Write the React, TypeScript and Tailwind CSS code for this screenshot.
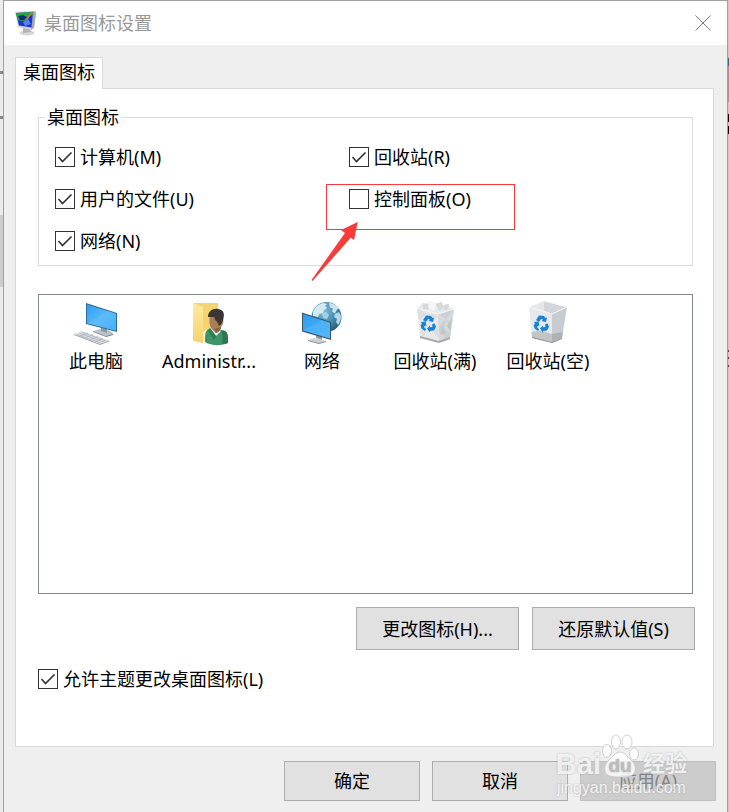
import React, { useState } from "react";

const ComputerIcon = () => (
  <svg viewBox="0 0 48 48" className="w-12 h-12" aria-hidden="true">
    <defs>
      <linearGradient id="pcScreen" x1="0" y1="0" x2="1" y2="1">
        <stop offset="0" stopColor="#2f9df0" />
        <stop offset="0.5" stopColor="#56b8fb" />
        <stop offset="1" stopColor="#3aa8f8" />
      </linearGradient>
    </defs>
    <path d="M21 32l13 5 7-2-1-2-9-4z" fill="#b9c3cb" />
    <path d="M21 32l13 5v1l-13-5z" fill="#83909a" />
    <path d="M34 37l7-2v1l-7 2z" fill="#6f7b85" />
    <path d="M29 28l6 2v4l-6-2z" fill="#8e9ba5" />
    <path d="M14 4l31 10v19L14 25z" fill="#2c6c9c" />
    <path d="M15 5.500l29 9.300v16.900L15 24.200z" fill="url(#pcScreen)" />
    <path d="M15 24.200L36 12l8 2.800v16.900z" fill="#6cc4fd" opacity="0.3" />
    <path d="M2 35l8-3 27 9.500-9 3.500z" fill="#dfe3e6" />
    <path d="M2 35v1l26 10 9-3.500v-1L28 45z" fill="#9ba4aa" />
    <path
      d="M5 35.500l25 9M7.500 34.300l25 8.800M9.500 33.200l25 8.800M8 37l8-3M13 39l8-3.300M18 40.800l8-3.200M23 42.800l8-3.200"
      stroke="#a9b1b7"
      strokeWidth="0.8"
      fill="none"
    />
  </svg>
);

const UserFolderIcon = () => (
  <svg viewBox="0 0 48 48" className="w-12 h-12" aria-hidden="true">
    <defs>
      <linearGradient id="folderFront" x1="0" y1="0" x2="0" y2="1">
        <stop offset="0" stopColor="#ffeaa3" />
        <stop offset="1" stopColor="#f5d26c" />
      </linearGradient>
    </defs>
    <path d="M8 4h25v35l-15 3H8z" fill="#f5d36e" />
    <path d="M8 4l10 4v36.500L8 41.500z" fill="url(#folderFront)" />
    <path d="M18 33l4-3v11l-4 3z" fill="#fff3c8" />
    <path d="M22 31l8-4 6 4 4 1c3 2 3 5 3 12-6 3-17 3-23-1 0-6 0-9 2-12z" fill="#3f9468" />
    <path d="M36 31l4 1c3 2 3 5 3 12l-6 1c1-5 1-9-1-14z" fill="#2c7650" />
    <path d="M25 29l3-1 8 4-5 5z" fill="#f1f5f2" />
    <path d="M25 29l6 8-2 4-6-9z" fill="#2f7d55" />
    <path d="M25 16c-1 5-1 9 1 13 1 2 3 3 5 5 3-1 5-4 5-6 3-3 3-8 1-12z" fill="#ad7d5a" />
    <path d="M31 34c3-1 5-4 5-6l-7 2z" fill="#8c6042" />
    <path d="M23 18c0-6 5-9 10-8 6 1 7 5 5 11-1 3-2 5-4 6-1-3-2-5-4-6 0-2 0-3-2-3s-4 0-5 0z" fill="#3b3735" />
  </svg>
);

const NetworkIcon = () => (
  <svg viewBox="0 0 48 48" className="w-12 h-12" aria-hidden="true">
    <defs>
      <radialGradient id="globeSea" cx="0.38" cy="0.3" r="0.75">
        <stop offset="0" stopColor="#7fc0da" />
        <stop offset="0.55" stopColor="#4690b4" />
        <stop offset="1" stopColor="#1e5b80" />
      </radialGradient>
      <linearGradient id="netScreen" x1="0" y1="0" x2="1" y2="1">
        <stop offset="0" stopColor="#2f9df0" />
        <stop offset="1" stopColor="#4db3fb" />
      </linearGradient>
    </defs>
    <circle cx="28.500" cy="18" r="15" fill="url(#globeSea)" />
    <path d="M15 13c2-5 6-8 10-9l4 1-2 2 2 2-3 2-1 3-4 1-1 3-5-1z" fill="#d5e9f0" />
    <path d="M31 3.500c4 1 8 3 10 6l-2 1-2 4-3-2 1-3-3-1z" fill="#cbe3ec" />
    <path d="M37 15l4-2 2 4c0 4-1 6-3 9l-2-3 1-3-3-2z" fill="#b6d6e3" />
    <path d="M24 14l4-1 3 3-2 4-4-1z" fill="#a7cfdf" />
    <path d="M18 34l6 2v5l-6-2z" fill="#8e9ba5" />
    <path d="M10 41l6-2 12 3-7 2z" fill="#cbd2d7" />
    <path d="M10 41l11 3 7-2v1l-7 2-11-3z" fill="#7d8992" />
    <path d="M4 13.500L33 23v18L4 32.500z" fill="#3c5666" />
    <path d="M5 15l27 8.700v15.900L5 31.600z" fill="url(#netScreen)" />
    <path d="M5 31.600L24 21l8 2.700v15.900z" fill="#6ac3fd" opacity="0.3" />
  </svg>
);

const RecycleMark = () => (
  <g fill="#1683d8">
    <path d="M12 21l3-4.500 5 .5 1.500 2 1.500-.500-1 4.500-4.500-1 1.300-1-1.300-1.500L15 23z" />
    <path d="M10 23l4.500-.500 1 4.500-1.200-.500L13 28l2 2.300-1 1.700-3.500-2.500-1-3.500 1.500-1z" />
    <path d="M16 29.500l3-3v1.800l2.500-.3-.5-2.500 2.500-1.200 1.500 3.700-2 3.500-4 .5v1.800z" />
  </g>
);

const FullBinIcon = () => (
  <svg viewBox="0 0 48 48" className="w-12 h-12" aria-hidden="true">
    <path d="M6 9l14-6 23 7-16 6z" fill="#d0d3d5" />
    <path d="M8 9l3-5 5 1 3-3 5 3 6-2 2 3 5-1 4 5-4 5-11 2-12-3z" fill="#e6e8ea" />
    <path d="M12 4l5 1 1 5-6 1zM25 5l6-2 1 6-4 3zM33 6l5-1-2 7-4-3z" fill="#d6d9dc" />
    <path d="M17 5l3-3 5 3-2 7-5-2z" fill="#f5f6f7" />
    <path d="M6 9l21 6 1 29-19-5z" fill="#e6e8e9" />
    <path d="M27 15l16-5-4 30-11 4z" fill="#cdd0d2" />
    <path d="M6 9l10 6-8 6zM16 15l11 0-5 9zM9 33l7-5-3 10zM22 32l6-4v12z" fill="#dcdfe1" />
    <path d="M27 15l8 5-7 7zM43 10l-8 10 6 5zM35 20l-3 12 8 1zM28 33l6 5-6 6z" fill="#d7dadc" />
    <path d="M32 26l3 8-6 2zM41 19l-5 8 3 5z" fill="#c1c5c8" />
    <path d="M9 37l19 5 11-4v2l-11 4-19-5z" fill="#aba9a7" />
    <path d="M6 9l21 6 16-5" stroke="#f6f7f7" strokeWidth="1" fill="none" />
    <RecycleMark />
  </svg>
);

const EmptyBinIcon = () => (
  <svg viewBox="0 0 48 48" className="w-12 h-12" aria-hidden="true">
    <path d="M5 8l15-6 23 6-15 7z" fill="#e4e6e8" />
    <path d="M20 2l23 6-15 7-8-3z" fill="#d3d6d9" />
    <path d="M5 8l23 7v29L8 39z" fill="#e6e8ea" />
    <path d="M28 15l15-7-5 31-10 5z" fill="#c8ccd0" />
    <path d="M7.500 33l10-1.500L28 35v8L8 38.500z" fill="#c2c4c6" />
    <path d="M28 35l10.800-2-.8 6-10 4z" fill="#aeb2b6" />
    <path d="M8 38l20 5 10-4v1l-10 4-20-5z" fill="#8f8f8f" />
    <path d="M5 8l15-6 23 6-15 7z" fill="none" stroke="#f4f5f6" strokeWidth="1" />
    <RecycleMark />
  </svg>
);

const TitleIcon = () => (
  <svg viewBox="0 0 24 26" className="w-6 h-[26px]" aria-hidden="true">
    <ellipse cx="13" cy="23" rx="7.500" ry="2.500" fill="#d6d6d6" />
    <path d="M9 18l7 0 1 4-8 1z" fill="#b4b4b4" />
    <path d="M1 2l18-1 3 1-2 16-3 2-13-3z" fill="#cfd3d3" />
    <path d="M19 1l3 1-2 16-3 2z" fill="#a4a9a9" />
    <path d="M2 3l17-1-1.500 15.500L5 15.500z" fill="#1a35d0" />
    <path d="M2 3l17-1-.3 3-3 1-2 4-5 1-5-1z" fill="#1fae33" />
    <path d="M4 6l5-1 4 2-3 3-4 0z" fill="#0f2c70" />
    <path d="M9 12l5-3 3 5-6 2z" fill="#5b7df4" />
    <path d="M12 9l6-8 1 1-6 8z" fill="#d2694a" />
  </svg>
);

const desktopItems = [
  { label: "此电脑", Icon: ComputerIcon },
  { label: "Administr...", Icon: UserFolderIcon },
  { label: "网络", Icon: NetworkIcon },
  { label: "回收站(满)", Icon: FullBinIcon },
  { label: "回收站(空)", Icon: EmptyBinIcon },
];

const CheckItem = ({ label, defaultChecked }: any) => {
  const [checked, setChecked] = useState(!!defaultChecked);
  return (
    <label className="flex items-center gap-[5px] w-fit">
      <span className="grid w-5 h-5">
        <input
          type="checkbox"
          checked={checked}
          onChange={() => setChecked(!checked)}
          className="col-start-1 row-start-1 appearance-none w-5 h-5 border border-[#333333] bg-white"
        />
        {checked && (
          <svg
            viewBox="0 0 20 20"
            className="col-start-1 row-start-1 w-5 h-5 pointer-events-none"
            aria-hidden="true">
            <path d="M3.500 10l4 4.500 9-9" fill="none" stroke="#333333" strokeWidth="1.6" />
          </svg>
        )}
      </span>
      {label}
    </label>
  );
};

const Watermark = () => (
  <div className="absolute right-10 bottom-[14px] flex flex-col items-center text-white/80 pointer-events-none font-['Liberation_Sans','Noto_Sans_CJK_SC',sans-serif] [text-shadow:0_0_2px_#aaaaaa]">
    <div className="flex items-end">
      <span className="text-[29px] leading-7 font-bold">Bai</span>
      <svg viewBox="0 0 38 44" className="w-[38px] h-11" aria-hidden="true">
        <g fill="#ffffff" fillOpacity="0.8" stroke="#c4c4c4" strokeOpacity="0.8" strokeWidth="1">
          <ellipse cx="6" cy="17" rx="4.500" ry="6.500" />
          <ellipse cx="15" cy="8" rx="4.500" ry="7" />
          <ellipse cx="26" cy="8" rx="5" ry="7" />
          <ellipse cx="33" cy="20" rx="4.500" ry="6" />
          <path d="M19 18c5 0 7 5 11 8 3 3 5 6 4 11-1 5-6 6-15 6S5 42 4 37c-1-5 1-8 4-11 4-3 6-8 11-8z" />
        </g>
        <text x="19" y="38" textAnchor="middle" fontSize="19" fontWeight="bold" fill="#bcbcbc">
          du
        </text>
      </svg>
      <span className="ml-1 text-[22px] leading-7 font-bold">经验</span>
    </div>
    <span className="text-base leading-5">jingyan.baidu.com</span>
  </div>
);

const App = () => {
  return (
    <div className="flex min-h-screen bg-[#ebebeb] text-lg leading-6 text-black font-['Noto_Sans','Noto_Sans_CJK_SC',sans-serif]">
      <div className="w-[3px] shrink-0" aria-hidden="true">
        <div className="mt-[71px] h-[3px] bg-[#888888]" />
        <div className="mt-[42px] h-[3px] bg-[#888888]" />
        <div className="mt-24 h-[72px] bg-[#cccccc]" />
      </div>

      <main className="relative flex-1 min-w-0 flex flex-col border border-b-0 border-[#a0a0a0] bg-[#efefef]">
        <header className="flex items-center h-11 pl-[10px] pr-4 bg-white">
          <TitleIcon />
          <h1 className="ml-[6px] text-[#999999]">桌面图标设置</h1>
          <button aria-label="关闭" className="ml-auto">
            <svg viewBox="0 0 16 16" className="w-4 h-4" aria-hidden="true">
              <path d="M.5.5l15 15M15.500.5l-15 15" stroke="#808080" strokeWidth="1" />
            </svg>
          </button>
        </header>

        <div className="px-[11px] pt-3 flex" role="tablist">
          <button
            role="tab"
            aria-selected="true"
            className="relative z-10 -mb-px h-8 px-[7px] pb-[3px] border border-b-0 border-[#d9d9d9] bg-white">
            桌面图标
          </button>
        </div>

        <section className="ml-[11px] mr-[13px] flex-1 border border-[#d9d9d9] bg-white pt-[17px] pb-[54px]">
          <fieldset className="relative ml-[22px] mr-5 border border-[#dcdcdc] px-4 pb-3">
            <legend className="-ml-[10px] px-[2px] leading-[22px]">桌面图标</legend>
            <div className="pt-[17px] grid grid-cols-[294px_1fr] gap-y-[18px]">
              <CheckItem label="计算机(M)" defaultChecked />
              <CheckItem label="回收站(R)" defaultChecked />
              <CheckItem label="用户的文件(U)" defaultChecked />
              <CheckItem label="控制面板(O)" />
              <CheckItem label="网络(N)" defaultChecked />
            </div>
            <div className="absolute left-[287px] bottom-[35px] w-[189px] h-[46px] border border-[#f93a3a] pointer-events-none" />
            <svg
              viewBox="0 0 48 60"
              className="absolute left-[272px] -bottom-4 w-12 h-[60px] pointer-events-none"
              aria-hidden="true">
              <path d="M46.700 1L30 9l4 3L.5 59l1 1L39.700 16.700 43 19z" fill="#fb3b39" />
            </svg>
          </fieldset>

          <ul className="mt-7 ml-[22px] mr-5 h-[300px] flex items-start gap-px pl-px pt-1 border border-[#828790]">
            {desktopItems.map(({ label, Icon }) => (
              <li key={label} className="w-28 flex flex-col items-center">
                <Icon />
                <span className="leading-7">{label}</span>
              </li>
            ))}
          </ul>

          <div className="mt-[13px] mr-[18px] flex justify-end gap-[13px]">
            <button className="w-[163px] h-[43px] border border-[#adadad] bg-[#e1e1e1]">
              更改图标(H)...
            </button>
            <button className="w-[163px] h-[43px] border border-[#adadad] bg-[#e1e1e1]">
              还原默认值(S)
            </button>
          </div>

          <div className="mt-[17px] ml-[22px]">
            <CheckItem label="允许主题更改桌面图标(L)" defaultChecked />
          </div>
        </section>

        <footer className="flex justify-end gap-3 pt-[14px] pr-[11px] pb-[11px]">
          <button className="w-[136px] h-10 border border-[#adadad] bg-[#e1e1e1]">确定</button>
          <button className="w-[136px] h-10 border border-[#adadad] bg-[#e1e1e1]">取消</button>
          <button
            disabled
            className="w-[136px] h-10 border border-[#bfbfbf] bg-[#cccccc] text-[#838383]">
            应用(A)
          </button>
        </footer>

        <Watermark />
      </main>

      <div className="w-px shrink-0 bg-[#c8c8c8]" aria-hidden="true">
        <div className="mt-[58px] h-2 bg-[#00808a]" />
        <div className="h-9 bg-[#999999]" />
        <div className="mt-3 h-2 bg-black" />
        <div className="mt-1 h-2 bg-black" />
        <div className="mt-[216px] h-[2px] bg-[#444444]" />
        <div className="mt-[5px] h-[2px] bg-[#444444]" />
        <div className="mt-[6px] h-[2px] bg-[#444444]" />
      </div>
    </div>
  );
};

export default App;
